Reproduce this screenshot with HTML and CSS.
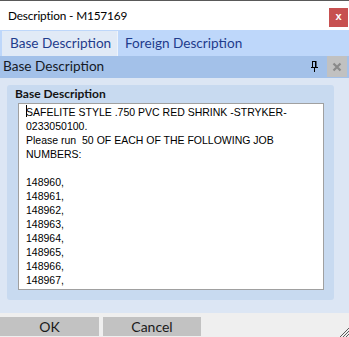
FILE: index.html
```html
<!DOCTYPE html>
<html>
<head>
<meta charset="utf-8">
<link rel="stylesheet" href="styles.css">
</head>
<body>
<div class="window">
  <div class="topline"></div>
  <div class="titlebar">
    <span class="title">Description - M157169</span>
    <span class="close">x</span>
  </div>
  <div class="tabs">
    <div class="tab active">Base Description</div>
    <div class="tab">Foreign Description</div>
  </div>
  <div class="panelhead">
    <span class="ph-title">Base Description</span>
    <span class="ph-tools">
      <svg class="pin" width="7" height="11" viewBox="0 0 7 11">
        <rect x="1.5" y="0.5" width="3" height="6" fill="none" stroke="#000"/>
        <rect x="4" y="0" width="1.5" height="7" fill="#000"/>
        <rect x="0" y="6" width="7" height="1" fill="#000"/>
        <rect x="3" y="7" width="1" height="4" fill="#000"/>
      </svg>
      <span class="ph-close">
        <svg width="10" height="10" viewBox="0 0 10 10">
          <path d="M1.5 1.5 L8.5 8.5 M8.5 1.5 L1.5 8.5" stroke="#8a8a8a" stroke-width="2.2"/>
        </svg>
      </span>
    </span>
  </div>
  <div class="content">
    <div class="group">
      <div class="group-title">Base Description</div>
      <div class="textbox"><span class="caret"></span>SAFELITE STYLE .750 PVC RED SHRINK -STRYKER-
0233050100.
Please run  50 OF EACH OF THE FOLLOWING JOB
NUMBERS:

148960,
148961,
148962,
148963,
148964,
148965,
148966,
148967,</div>
    </div>
  </div>
  <div class="buttons">
    <div class="btn btn-ok">OK</div>
    <div class="btn btn-cancel">Cancel</div>
    <svg class="grip" width="10" height="10" viewBox="0 0 10 10">
      <path d="M10 1 L1 10 M10 4 L4 10 M10 7 L7 10" stroke="#5a5a5a" stroke-width="1"/>
    </svg>
  </div>
</div>
</body>
</html>
```

FILE: styles.css
```css
html, body {
  margin: 0;
  padding: 0;
}
* {
  box-sizing: border-box;
}
body {
  width: 349px;
  height: 337px;
  overflow: hidden;
  font-family: "Lato", "Liberation Sans", sans-serif;
}
.window {
  width: 349px;
  height: 337px;
  display: flex;
  flex-direction: column;
  background: #ffffff;
}
.topline {
  height: 1px;
  background: #595959;
}
.titlebar {
  height: 29px;
  display: flex;
  justify-content: space-between;
  align-items: flex-start;
  padding-left: 8px;
  padding-right: 1px;
}
.title {
  font-size: 11.8px;
  letter-spacing: -0.15px;
  line-height: 14px;
  margin-top: 8px;
  color: #000;
}
.close {
  width: 19px;
  height: 19px;
  margin-top: 7px;
  background: #c75050;
  color: #fff;
  font-family: "Liberation Sans", sans-serif;
  font-weight: bold;
  font-size: 11px;
  line-height: 17px;
  text-align: center;
}
.tabs {
  height: 26px;
  background: #bed7fa;
  display: flex;
  align-items: flex-end;
  padding-left: 2px;
}
.tab {
  height: 25px;
  font-size: 13.6px;
  line-height: 24px;
  color: #1f3c8c;
  padding: 0 6px 0 8px;
  white-space: nowrap;
}
.tab.active {
  width: 116px;
  background: #e1eaf6;
  border-right: 1px solid #eef3fa;
}
.tab + .tab {
  padding-left: 7px;
}
.panelhead {
  height: 22px;
  background: #a3c1e9;
  display: flex;
  justify-content: space-between;
  align-items: stretch;
  padding-left: 3px;
  padding-right: 2px;
}
.ph-title {
  font-size: 13.6px;
  line-height: 20px;
  color: #151a26;
  white-space: nowrap;
}
.ph-tools {
  display: flex;
  align-items: flex-start;
}
.pin {
  margin-top: 5px;
  margin-right: 9px;
}
.ph-close {
  width: 20px;
  height: 21px;
  background: #c1c1c1;
  display: flex;
  align-items: center;
  justify-content: center;
}
.content {
  flex: 1;
  background: #dce6f4;
  padding: 7px 15px 13px 7px;
  display: flex;
}
.group {
  flex: 1;
  background: #c8daf0;
  border-radius: 3px;
  display: flex;
  flex-direction: column;
  padding: 2px 10px 10px 11px;
}
.group-title {
  height: 16px;
  font-weight: bold;
  font-size: 12px;
  line-height: 14px;
  color: #141414;
  margin-left: -3px;
  white-space: nowrap;
}
.textbox {
  flex: 1;
  background: #fff;
  border: 1px solid #a0a0a0;
  padding: 1px 7px 0 7px;
  font-family: "Liberation Sans", sans-serif;
  font-size: 10.5px;
  line-height: 14px;
  color: #000;
  white-space: pre;
  overflow: hidden;
  position: relative;
}
.caret {
  position: absolute;
  left: 7px;
  top: 1px;
  width: 1px;
  height: 12px;
  background: #000;
}
.buttons {
  height: 24px;
  background: #efefef;
  display: flex;
  align-items: flex-start;
  padding-top: 4px;
  gap: 4px;
  position: relative;
}
.btn {
  height: 19px;
  background: #c2c2c2;
  font-size: 14px;
  line-height: 19px;
  text-align: center;
  color: #1a1a1a;
}
.btn-ok {
  width: 99px;
}
.btn-cancel {
  width: 98px;
}
.grip {
  position: absolute;
  right: 0;
  bottom: 0;
}
```
